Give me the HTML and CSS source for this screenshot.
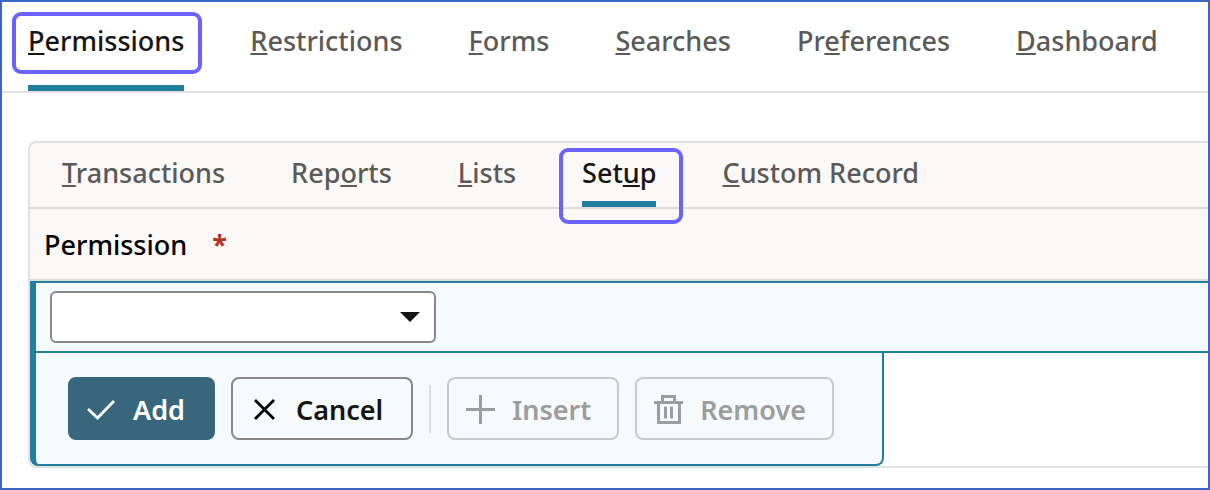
FILE: index.html
```
<!doctype html>
<html lang="en">
<head>
    <meta charset="UTF-8">
    <title>Permissions</title>
    <link rel="stylesheet" href="styles.css">
</head>
<body>
    <div class="page">
        <nav class="tabs main-tabs">
            <a class="tab active highlight" href="#permissions"><u>P</u>ermissions</a>
            <a class="tab" href="#restrictions"><u>R</u>estrictions</a>
            <a class="tab" href="#forms"><u>F</u>orms</a>
            <a class="tab" href="#searches"><u>S</u>earches</a>
            <a class="tab" href="#preferences">Pr<u>e</u>ferences</a>
            <a class="tab" href="#dashboard"><u>D</u>ashboard</a>
        </nav>
        <div class="panel">
            <nav class="tabs sub-tabs">
                <a class="tab" href="#transactions"><u>T</u>ransactions</a>
                <a class="tab" href="#reports">Rep<u>o</u>rts</a>
                <a class="tab" href="#lists"><u>L</u>ists</a>
                <a class="tab active highlight" href="#setup">Set<u>u</u>p</a>
                <a class="tab" href="#custom"><u>C</u>ustom Record</a>
            </nav>
            <form id="setup">
                <div class="field-head">
                    <label for="permission">Permission</label>
                    <span class="required">*</span>
                </div>
                <div class="field-row">
                    <div class="select-box">
                        <select id="permission" name="permission">
                            <option value=""></option>
                        </select>
                        <svg class="arrow" width="20" height="10" viewBox="0 0 20 10"><path d="M0 0h20L10 10z" fill="#161513"/></svg>
                    </div>
                </div>
                <div class="actions">
                    <button type="submit" class="btn primary">
                        <svg class="icon" viewBox="0 0 30 30"><path d="M2 14l9.500 9L28 6" fill="none" stroke="currentColor" stroke-width="2.800"/></svg>
                        Add
                    </button>
                    <button type="reset" class="btn">
                        <svg class="icon" viewBox="0 0 30 30"><path d="M6 5l19 19M25 5L6 24" fill="none" stroke="#000" stroke-width="2.800"/></svg>
                        Cancel
                    </button>
                    <span class="divider"></span>
                    <button type="button" class="btn" disabled>
                        <svg class="icon" viewBox="0 0 30 30"><path d="M15.500 0v29M1 14.500h29" fill="none" stroke="currentColor" stroke-width="3"/></svg>
                        Insert
                    </button>
                    <button type="button" class="btn" disabled>
                        <svg class="icon" viewBox="0 0 30 30"><path d="M1 7.500h29M5.500 7.500v20h21v-20M9.500 7V1.500h12V7M12.500 11.500v12M18.500 11.500v12" fill="none" stroke="currentColor" stroke-width="3"/></svg>
                        Remove
                    </button>
                </div>
            </form>
        </div>
    </div>
</body>
</html>
```
FILE: styles.css
```
* {
    box-sizing: border-box;
}

body {
    margin: 0;
    font-family: "Noto Sans", "Open Sans", sans-serif;
    font-size: 27px;
    font-weight: 500;
    line-height: 36px;
    color: #161513;
}

.page {
    min-height: 100vh;
    border: 2px solid #3b66c4;
    background-color: #fff;
    overflow: hidden;
}

.tabs {
    display: flex;
    gap: 66px;
    border-bottom: 2px solid #e2e2e2;
}

.main-tabs {
    padding: 21px 26px 0;
}

.sub-tabs {
    padding: 12px 32px 0;
    border-color: #dddcdb;
}

.tab {
    position: relative;
    white-space: nowrap;
    color: #5b5a58;
    text-decoration: none;
    border-bottom: 6px solid transparent;
}

.main-tabs .tab {
    padding-bottom: 26px;
}

.sub-tabs .tab {
    padding-bottom: 10px;
}

.tab u {
    text-decoration-thickness: 2px;
    text-underline-offset: 2px;
    text-decoration-skip-ink: none;
}

.tab.active {
    color: #161513;
    border-bottom-color: #227e9e;
}

/* ring around the selected tab */
.highlight::after {
    content: "";
    position: absolute;
    border: 4px solid #6c63ff;
    border-radius: 9px;
}

.main-tabs .highlight::after {
    inset: -11px -18px 11px -16px;
}

.sub-tabs .highlight::after {
    inset: -7px -27px -23px -23px;
}

.panel {
    margin: 48px 0 20px 26px;
    border: 2px solid #e2e2e2;
    border-right: none;
    border-radius: 8px 0 0 8px;
    background: linear-gradient(#faf9f8 138px, #fff 138px);
}

.field-head {
    display: flex;
    gap: 25px;
    padding: 18px 14px 16px;
    border-bottom: 2px solid #dddcdb;
    color: #000;
}

.required {
    color: #b3311f;
    font-weight: 700;
}

.field-row {
    padding: 8px 14px;
    border: solid #227e9e;
    border-width: 2px 0 2px 6px;
    background-color: #f5fafd;
}

.select-box {
    position: relative;
    width: 386px;
    height: 52px;
}

.select-box select {
    width: 100%;
    height: 100%;
    border: 2px solid #8a8987;
    border-radius: 6px;
    background-color: #fff;
    font: inherit;
    appearance: none;
}

.arrow {
    position: absolute;
    top: 21px;
    right: 16px;
    pointer-events: none;
}

.actions {
    display: flex;
    align-items: center;
    gap: 16px;
    width: fit-content;
    padding: 24px 48px 24px 32px;
    border: solid #227e9e;
    border-width: 0 2px 2px 6px;
    border-radius: 0 0 8px 8px;
    background-color: #f5fafd;
}

.btn {
    display: flex;
    align-items: center;
    gap: 17px;
    height: 63px;
    padding: 2px 28px 0 16px;
    border: 2px solid #8a8987;
    border-radius: 8px;
    background-color: transparent;
    color: #161513;
    font: inherit;
    font-weight: 600;
}

.btn.primary {
    border-color: #38677d;
    background-color: #38677d;
    color: #fff;
}

.btn:disabled {
    padding-right: 26px;
    border-color: #c8cacb;
    color: #9c9d9e;
}

.icon {
    width: 30px;
    height: 30px;
}

.divider {
    width: 2px;
    height: 48px;
    background-color: #dbdfe1;
}
```
